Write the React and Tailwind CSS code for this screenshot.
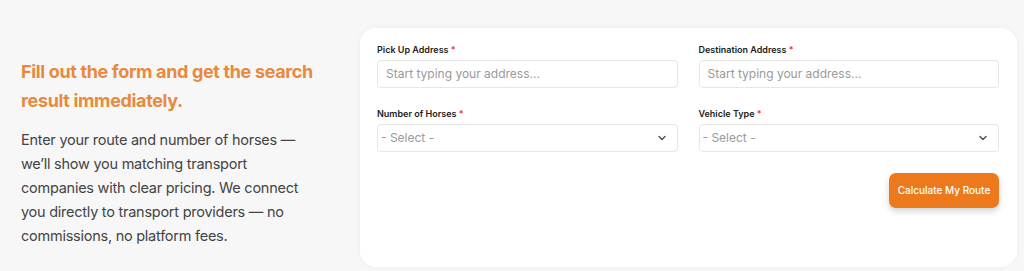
import React from "react";

function Chevron() {
  return (
    <svg width="12" height="12" viewBox="0 0 24 24" fill="none" stroke="#555" strokeWidth="3" strokeLinecap="round" strokeLinejoin="round">
      <path d="M6 9l6 6 6-6" />
    </svg>
  );
}

function Label({ children }) {
  return (
    <div className="text-[9px] font-semibold text-[#222] leading-[12px] mb-[4px]">
      {children} <span className="text-[#e0453a]">*</span>
    </div>
  );
}

function Input() {
  return (
    <div className="h-[28px] rounded-[4px] border border-[#e6e6e6] bg-white flex items-center px-[8px] text-[12px] text-[#9a9a9a]">
      Start typing your address...
    </div>
  );
}

function Select() {
  return (
    <div className="h-[28px] rounded-[4px] border border-[#e6e6e6] bg-white flex items-center justify-between pl-[3px] pr-[9px] text-[12px] text-[#9a9a9a]">
      <span>- Select -</span>
      <Chevron />
    </div>
  );
}

export default function App() {
  return (
    <div className="w-[1024px] h-[271px] bg-[#f7f7f7] flex" style={{ fontFamily: "Inter, 'Noto Sans', sans-serif" }}>
      <div className="w-[360px] shrink-0 pl-[21px] pr-[20px] flex flex-col pt-[57px]">
        <h2 className="text-[18px] leading-[29px] font-bold text-[#e8893d] tracking-[-0.35px]">
          Fill out the form and get the search result immediately.
        </h2>
        <p className="mt-[13px] text-[14.5px] leading-[24px] text-[#444] tracking-[-0.25px] w-[290px]">
          Enter your route and number of horses — we’ll show you matching transport companies with clear pricing. We connect you directly to transport providers — no commissions, no platform fees.
        </p>
      </div>
      <div className="mt-[28px] w-[657px] h-[239px] bg-white rounded-[16px] shadow-[0_0_6px_rgba(0,0,0,0.04)] pl-[17px] pr-[18px] pt-[16px] flex flex-col">
        <div className="grid grid-cols-2 gap-x-[21px] gap-y-[20px]">
          <div>
            <Label>Pick Up Address</Label>
            <Input />
          </div>
          <div>
            <Label>Destination Address</Label>
            <Input />
          </div>
          <div>
            <Label>Number of Horses</Label>
            <Select />
          </div>
          <div>
            <Label>Vehicle Type</Label>
            <Select />
          </div>
        </div>
        <div className="flex justify-end mt-[21px]">
          <button className="h-[35px] w-[110px] rounded-[7px] bg-[#ec7a1c] text-white text-[10px] font-medium shadow-[0_3px_6px_rgba(0,0,0,0.18)]">
            Calculate My Route
          </button>
        </div>
      </div>
    </div>
  );
}
